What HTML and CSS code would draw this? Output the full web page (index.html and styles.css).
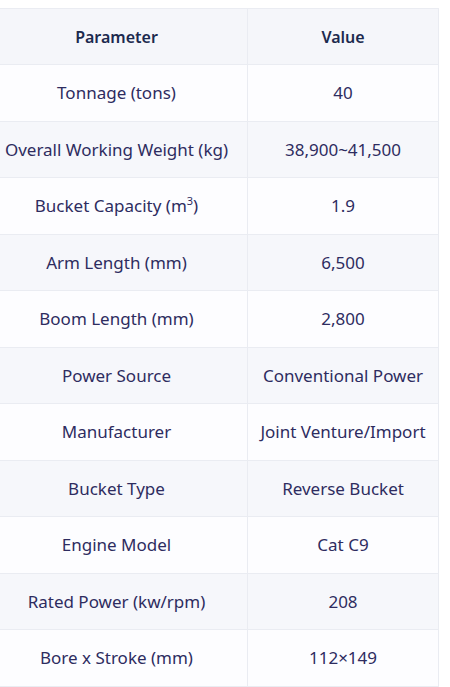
FILE: index.html
```html
<!DOCTYPE html>
<html lang="en">
<head>
<meta charset="utf-8">
<title>Specs</title>
<link rel="stylesheet" href="styles.css">
</head>
<body>
<div class="wrap">
<table class="specs">
<thead>
<tr><th class="c1">Parameter</th><th class="c2">Value</th></tr>
</thead>
<tbody>
<tr><td>Tonnage (tons)</td><td>40</td></tr>
<tr><td>Overall Working Weight (kg)</td><td>38,900~41,500</td></tr>
<tr><td>Bucket Capacity (m<sup>3</sup>)</td><td>1.9</td></tr>
<tr><td>Arm Length (mm)</td><td>6,500</td></tr>
<tr><td>Boom Length (mm)</td><td>2,800</td></tr>
<tr><td>Power Source</td><td>Conventional Power</td></tr>
<tr><td>Manufacturer</td><td>Joint Venture/Import</td></tr>
<tr><td>Bucket Type</td><td>Reverse Bucket</td></tr>
<tr><td>Engine Model</td><td>Cat C9</td></tr>
<tr><td>Rated Power (kw/rpm)</td><td>208</td></tr>
<tr><td>Bore x Stroke (mm)</td><td>112×149</td></tr>
</tbody>
</table>
</div>
</body>
</html>
```
FILE: styles.css
```css
html, body { background: #ffffff; }
body { margin: 8px 0 0 0; font-family: "Noto Sans", "Open Sans", sans-serif; }
.wrap { overflow: hidden; }
.specs {
  border-collapse: collapse;
  margin-left: -15px;
  width: 451px;
  table-layout: fixed;
}
.specs th, .specs td {
  border: 1px solid #eaecf2;
  text-align: center;
  vertical-align: middle;
  height: 55.5px;
  padding: 0;
  font-size: 17px;
  color: #2e2c5f;
}
.specs th { background: #f5f6fa; font-weight: 600; font-size: 16px; color: #1c2a4e; height: 55px; }
.specs .c1 { width: 261px; }
.specs .c2 { width: 190px; }
.specs tbody tr:nth-child(odd) td { background: #fdfdff; }
.specs tbody tr:nth-child(even) td { background: #f6f7fb; }
.specs sup { font-size: 11px; line-height: 0; }
```
